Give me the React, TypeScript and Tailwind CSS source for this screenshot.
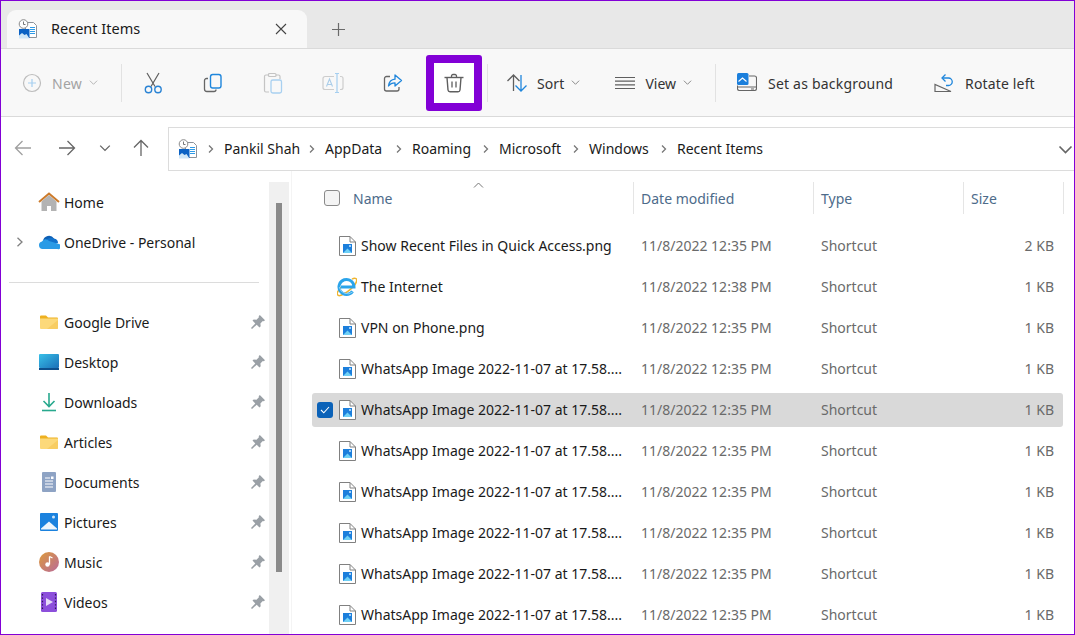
import React from "react";

const RecentIcon = () => (
  <svg width="20" height="20" viewBox="0 0 20 20" className="shrink-0">
    <path d="M7.500 3.500h8l3 3v12h-11z" fill="#fff" stroke="#8d9299" />
    <path d="M12 8.500h5M12 10.500h5M12 12.500h5M12 14.500h5" stroke="#2f9be8" />
    <circle cx="5.500" cy="5" r="4.300" fill="#fff" stroke="#8b8b8b" />
    <path d="M5.500 2.500v3h2" fill="none" stroke="#777" />
    <path d="M1 10h10.500v9H1z" fill="#0c62c4" />
    <path d="M1 19.500v-3l3-2.500 2.500 2 2-1 3 4.500z" fill="#cfe6f7" />
  </svg>
);

const Chev = ({ className = "", color = "#8a8a8a", w = 9 }: { className?: string; color?: string; w?: number }) => (
  <svg width={w} height={w} viewBox="0 0 10 10" className={"shrink-0 " + className}>
    <path d="M1 3l4 4 4-4" fill="none" stroke={color} strokeWidth="1.100" />
  </svg>
);

const Crumb = () => (
  <svg width="8" height="10" viewBox="0 0 8 10" className="shrink-0 mx-[9px]">
    <path d="M2 1.500l3.500 3.500-3.500 3.500" fill="none" stroke="#777" strokeWidth="1.300" />
  </svg>
);

const New = () => (
  <svg width="20" height="20" viewBox="0 0 20 20">
    <circle cx="10" cy="10" r="8.500" fill="none" stroke="#bdbdbd" strokeWidth="1.200" />
    <path d="M10 6v8M6 10h8" stroke="#a6cff0" strokeWidth="1.200" />
  </svg>
);
const Cut = () => (
  <svg width="20" height="22" viewBox="0 0 20 22">
    <path d="M4 1l8 13.500M16 1L8 14.500" fill="none" stroke="#5f5f5f" strokeWidth="1.200" />
    <circle cx="5.500" cy="17.500" r="3.200" fill="none" stroke="#2a83d4" strokeWidth="1.400" />
    <circle cx="15" cy="17.500" r="3.200" fill="none" stroke="#2a83d4" strokeWidth="1.400" />
  </svg>
);
const Copy = () => (
  <svg width="20" height="20" viewBox="0 0 20 20">
    <path d="M5 5.500H3.500a2 2 0 0 0-2 2v8.500a2.500 2.500 0 0 0 2.500 2.500h7a2 2 0 0 0 2-2" fill="none" stroke="#666" strokeWidth="1.300" />
    <rect x="7.500" y="1.500" width="10.500" height="13.500" rx="2.200" fill="none" stroke="#1f86dc" strokeWidth="1.400" />
  </svg>
);
const Paste = () => (
  <svg width="20" height="22" viewBox="0 0 20 22">
    <path d="M5.500 3H3a1.500 1.500 0 0 0-1.500 1.500v14A1.500 1.500 0 0 0 3 20h3M13 3h2.500A1.500 1.500 0 0 1 17 4.500V7" fill="none" stroke="#c4c4c4" strokeWidth="1.200" />
    <rect x="5.500" y="1.500" width="7.500" height="3" rx="1" fill="none" stroke="#c4c4c4" strokeWidth="1.200" />
    <rect x="8" y="8" width="10.500" height="13" rx="1.800" fill="none" stroke="#a8d0f0" strokeWidth="1.300" />
  </svg>
);
const Rename = () => (
  <svg width="22" height="22" viewBox="0 0 22 22">
    <path d="M12 4.500H3a2 2 0 0 0-2 2v9a2 2 0 0 0 2 2h9M18 4.500h1a2 2 0 0 1 2 2v9a2 2 0 0 1-2 2h-1" fill="none" stroke="#cdcdcd" strokeWidth="1.200" />
    <path d="M4.500 14.500L7.500 7l3 7.500M5.500 12.500h4" fill="none" stroke="#aacde9" strokeWidth="1.100" />
    <path d="M13 1.500h4M13 20.500h4M15 1.500v19" fill="none" stroke="#a6cff0" strokeWidth="1.200" />
  </svg>
);
const Share = () => (
  <svg width="20" height="20" viewBox="0 0 20 20">
    <path d="M7 3.500H3.500a2 2 0 0 0-2 2v10.500a2 2 0 0 0 2 2H14a2 2 0 0 0 2-2v-2" fill="none" stroke="#666" strokeWidth="1.300" />
    <path d="M12 2l6.500 5.500L12 13v-3.200c-3 0-5 1-6.500 3.200.5-4 2.800-6.500 6.500-6.800z" fill="none" stroke="#1f86dc" strokeWidth="1.300" strokeLinejoin="round" />
  </svg>
);
const Trash = () => (
  <svg width="20" height="20" viewBox="0 0 20 20">
    <path d="M.5 4.500h19" stroke="#5f5f5f" strokeWidth="1.400" />
    <path d="M7.500 4.500V3a1.500 1.500 0 0 1 1.500-1.500h2A1.500 1.500 0 0 1 12.500 3v1.500" fill="none" stroke="#5f5f5f" strokeWidth="1.300" />
    <path d="M3 4.500l1 12.500a2 2 0 0 0 2 1.800h8a2 2 0 0 0 2-1.800l1-12.500" fill="none" stroke="#5f5f5f" strokeWidth="1.400" />
    <path d="M8 8.500v6M12 8.500v6" stroke="#5f5f5f" strokeWidth="1.300" />
  </svg>
);
const Sort = () => (
  <svg width="22" height="20" viewBox="0 0 22 20">
    <path d="M7.500 18V2M1.500 8l6-6 6 6" fill="none" stroke="#5f5f5f" strokeWidth="1.300" />
    <path d="M15 2v16M9.500 12.500l5.500 5.500 5.500-5.500" fill="none" stroke="#1f86dc" strokeWidth="1.300" />
  </svg>
);
const ViewIcon = () => (
  <svg width="20" height="14" viewBox="0 0 20 14">
    <path d="M0 1.500h20M0 5.200h20M0 8.900h20M0 12.500h20" stroke="#5f5f5f" strokeWidth="1.200" />
  </svg>
);
const SetBg = () => (
  <svg width="20" height="19" viewBox="0 0 20 19">
    <path d="M12 3h5.500a2 2 0 0 1 2 2v10.500a2 2 0 0 1-2 2H2.500a2 2 0 0 1-2-2v-3" fill="none" stroke="#666" strokeWidth="1.100" />
    <path d="M.5 14h19" stroke="#666" strokeWidth="1" />
    <path d="M14 16h3" stroke="#666" strokeWidth="1" />
    <rect x="0" y="0" width="11.500" height="12" rx="1.500" fill="#1b7fdc" />
    <path d="M1.500 8.500l4-3.500 4 3.500" fill="none" stroke="#fff" strokeWidth="1.100" />
  </svg>
);
const Rotate = () => (
  <svg width="19" height="20" viewBox="0 0 19 20">
    <path d="M1 18.500V11.500L17 18.500z" fill="none" stroke="#666" strokeWidth="1.200" />
    <path d="M9 5h5.500a3 3 0 0 1 0 7.500H12" fill="none" stroke="#1f86dc" strokeWidth="1.300" />
    <path d="M11.500 1.500L8 5l3.500 3.500" fill="none" stroke="#1f86dc" strokeWidth="1.300" />
  </svg>
);

const Pin = () => (
  <svg width="14" height="14" viewBox="0 0 14 14" className="shrink-0">
    <path d="M8.800 0L14 5.200l-1.200 1.100-1-.2-2.400 2.400.3 2.800-1.200 1.200-2.800-2.800L1 14l-1-1 4.300-4.600-2.800-2.800 1.200-1.200 2.800.3L7.900 2.300l-.2-1z" fill="#9aa0a6" />
  </svg>
);

const Folder = () => (
  <svg width="20" height="20" viewBox="0 0 20 20">
    <path d="M1 4.500A1 1 0 0 1 2 3.500h5l2 2h9a1 1 0 0 1 1 1V7H1z" fill="#eeb01f" />
    <path d="M1 6.500h18v9.500a1 1 0 0 1-1 1H2a1 1 0 0 1-1-1z" fill="#fcd97a" />
    <path d="M8 17l11-9v8a1 1 0 0 1-1 1z" fill="#f8cd62" />
  </svg>
);
const HomeIcon = () => (
  <svg width="22" height="20" viewBox="0 0 22 20">
    <path d="M3.500 9.500L11 3l7.500 6.500V19H13v-5H9v5H3.500z" fill="#b3b3b3" />
    <path d="M1 10L11 1.500 21 10" fill="none" stroke="#cc7a2a" strokeWidth="2" />
  </svg>
);
const Cloud = () => (
  <svg width="22" height="16" viewBox="0 0 22 16">
    <path d="M5 7a6 6 0 0 1 11-2.500A4 4 0 0 1 19 9H5z" fill="#0d5fb5" />
    <path d="M8 7a5 5 0 0 1 8-2 4 4 0 0 1 4 4l-7 2z" fill="#1272cc" />
    <path d="M4.500 15A3.800 3.800 0 0 1 4 7.500 4 4 0 0 1 11 7l10 3a2.500 2.500 0 0 1-1.500 5z" fill="#2a9be6" />
  </svg>
);
const DesktopIcon = () => (
  <svg width="20" height="16" viewBox="0 0 20 16">
    <defs>
      <linearGradient id="dg" x1="0" y1="0" x2="1" y2="1">
        <stop offset="0" stopColor="#38c0e8" />
        <stop offset="1" stopColor="#1b6fb8" />
      </linearGradient>
    </defs>
    <rect x="0" y="0" width="20" height="14" rx="1" fill="url(#dg)" />
    <rect x="0" y="14" width="20" height="2" fill="#0e4f8c" />
  </svg>
);
const Download = () => (
  <svg width="16" height="20" viewBox="0 0 16 20">
    <path d="M8 1v13M2.500 9l5.500 5.500L13.500 9" fill="none" stroke="#28a98e" strokeWidth="1.600" />
    <path d="M1 18.500h14" stroke="#28a98e" strokeWidth="1.600" />
  </svg>
);
const Docs = () => (
  <svg width="14" height="20" viewBox="0 0 14 20">
    <rect width="14" height="20" rx="1" fill="#8ea3c4" />
    <path d="M3 6h5M3 9h8M3 12h8M3 15h8" stroke="#fff" strokeWidth="1.100" />
    <rect x="9" y="4.500" width="2.500" height="2.500" fill="#fff" />
  </svg>
);
const Pictures = () => (
  <svg width="18" height="18" viewBox="0 0 18 18">
    <rect width="18" height="18" rx="1" fill="#1b82de" />
    <path d="M1 16.500v-1l8-7 8 7v1z" fill="#eef6fc" />
    <circle cx="13.500" cy="4" r="1.500" fill="#cfe6f9" />
  </svg>
);
const Music = () => (
  <svg width="20" height="20" viewBox="0 0 20 20">
    <defs>
      <linearGradient id="mg" x1="0" y1="0" x2="1" y2="1">
        <stop offset="0" stopColor="#dc9a3a" />
        <stop offset="1" stopColor="#b96a9a" />
      </linearGradient>
    </defs>
    <circle cx="10" cy="10" r="10" fill="url(#mg)" />
    <path d="M10.500 4.500v8" stroke="#fff" strokeWidth="1.300" />
    <path d="M10.500 4.500l3 1.500" stroke="#fff" strokeWidth="1.300" />
    <circle cx="8.500" cy="12.500" r="2.200" fill="#fff" />
  </svg>
);
const Videos = () => (
  <svg width="16" height="20" viewBox="0 0 16 20">
    <rect width="16" height="20" rx="1.500" fill="#8c4fdb" />
    <path d="M5 6l7 4-7 4z" fill="#e6dcf7" />
    <path d="M1.500 2v16M14.500 2v16" stroke="#2e1a57" strokeWidth="1.200" strokeDasharray="1.400 2" />
  </svg>
);

const FileIcon = () => (
  <svg width="17" height="20" viewBox="0 0 17 20" className="shrink-0">
    <path d="M.5.500h10.500l5.500 5.500v13.500H.500z" fill="#fff" stroke="#808080" />
    <path d="M11 .5v5.500h5.500" fill="none" stroke="#808080" />
    <rect x="4" y="8" width="9" height="9" fill="#1c7fdc" />
    <path d="M4 17l4.500-4.500L13 17z" fill="#6fd0f5" />
    <circle cx="11" cy="10" r="1" fill="#cfeaff" />
  </svg>
);
const IE = () => (
  <svg width="20" height="20" viewBox="0 0 20 20" className="shrink-0">
    <path d="M15 2.200c2.500-1.500 4.700-1 4.700 1 0 3-4.700 8-9.200 11.500-5 3.700-9 5-10 3-.7-1.300.8-4.500 3.500-7.500" fill="none" stroke="#efb530" strokeWidth="1.500" />
    <path d="M15.600 14.300A7.500 7.500 0 1 1 17 10H4" fill="none" stroke="#2ba4ea" strokeWidth="3" />
    <path d="M15.800 14.800A8.300 8.300 0 0 1 2.200 10" fill="none" stroke="#8dd2f5" strokeWidth="1" />
  </svg>
);

const tools: React.ReactNode[] = [<Cut />, <Copy />, <Paste />, <Rename />, <Share />];

const nav: [string, React.ReactNode][] = [
  ["Google Drive", <Folder />],
  ["Desktop", <DesktopIcon />],
  ["Downloads", <Download />],
  ["Articles", <Folder />],
  ["Documents", <Docs />],
  ["Pictures", <Pictures />],
  ["Music", <Music />],
  ["Videos", <Videos />],
];

const crumbs: [string, string][] = [
  ["Pankil Shah", "w-[75px]"],
  ["AppData", "w-[61px]"],
  ["Roaming", "w-[61px]"],
  ["Microsoft", "w-[64px]"],
  ["Windows", "w-[62px]"],
  ["Recent Items", "w-[86px]"],
];

const WA = "WhatsApp Image 2022-11-07 at 17.58....";
const files = [
  { n: "Show Recent Files in Quick Access.png", d: "11/8/2022 12:35 PM", s: "2 KB" },
  { n: "The Internet", d: "11/8/2022 12:38 PM", s: "1 KB", ie: true },
  { n: "VPN on Phone.png", d: "11/8/2022 12:35 PM", s: "1 KB" },
  { n: WA, d: "11/8/2022 12:35 PM", s: "1 KB" },
  { n: WA, d: "11/8/2022 12:35 PM", s: "1 KB", sel: true },
  { n: WA, d: "11/8/2022 12:35 PM", s: "1 KB" },
  { n: WA, d: "11/8/2022 12:35 PM", s: "1 KB" },
  { n: WA, d: "11/8/2022 12:35 PM", s: "1 KB" },
  { n: WA, d: "11/8/2022 12:35 PM", s: "1 KB" },
  { n: WA, d: "11/8/2022 12:35 PM", s: "1 KB" },
];

const NavRow = ({ icon, label, pin, chevron }: { icon: React.ReactNode; label: string; pin?: boolean; chevron?: boolean }) => (
  <div className="flex h-10 items-center text-[#1a1a1a]">
    <div className="ml-[12px] flex w-[13px] justify-center">
      {chevron && (
        <svg width="8" height="10" viewBox="0 0 8 10">
          <path d="M1.500 .8l4.500 4.200-4.500 4.200" fill="none" stroke="#808080" strokeWidth="1.300" />
        </svg>
      )}
    </div>
    <div className="ml-[12px] flex w-[22px] justify-center">{icon}</div>
    <span className="ml-[4px] flex-1">{label}</span>
    {pin && (
      <div className="mr-[4px]">
        <Pin />
      </div>
    )}
  </div>
);

export default function App() {
  return (
    <div
      className="flex h-[635px] w-[1075px] flex-col overflow-hidden border border-[#8200d6] bg-white text-[14px]"
      style={{ fontFamily: '"Noto Sans", sans-serif' }}
    >
      {/* tabs */}
      <div className="flex h-[48px] shrink-0 items-end border-b border-[#dadada] bg-[#e8e8e8]">
        <div className="ml-[6px] flex h-[38px] w-[300px] items-center rounded-t-[9px] bg-[#f8f8f8] pb-[1px] pl-[11px] pr-[20px]">
          <RecentIcon />
          <span className="ml-[13px] flex-1 text-[14.5px] text-[#1a1a1a]">Recent Items</span>
          <svg width="12" height="12" viewBox="0 0 12 12">
            <path d="M1 1l10 10M11 1L1 11" stroke="#444" strokeWidth="1.100" />
          </svg>
        </div>
        <div className="ml-[25px] flex h-[38px] items-center">
          <svg width="13" height="13" viewBox="0 0 13 13">
            <path d="M6.500 0v13M0 6.500h13" stroke="#6a6a6a" strokeWidth="1.200" />
          </svg>
        </div>
      </div>

      {/* toolbar */}
      <div className="flex h-[68px] shrink-0 items-center border-b border-[#dadada] bg-[#f8f8f8] text-[#333]">
        <div className="flex w-[120px] items-center pl-[21px] text-[#a3a3a3]">
          <New />
          <span className="ml-[10px] pt-[2px] tracking-[0.3px]">New</span>
          <Chev className="ml-[7px]" color="#b5b5b5" />
        </div>
        <div className="h-[38px] w-px bg-[#e2e2e2]" />
        {tools.map((icon, i) => (
          <div key={i} className={"flex h-[38px] items-center justify-center " + (i === 0 ? "w-[61px] pl-px" : "w-[60px]")}>
            {icon}
          </div>
        ))}
        <div className="ml-[3px] flex h-[56px] w-[56px] items-center justify-center rounded-[3px] border-[8px] border-[#8200d6] bg-white pr-[1px]">
          <Trash />
        </div>
        <div className="ml-[5px] h-[38px] w-px bg-[#e2e2e2]" />
        <div className="ml-[18px] flex items-center">
          <Sort />
          <span className="ml-[9px] pt-[2px] tracking-[0.1px]">Sort</span>
          <Chev className="ml-[7px]" />
        </div>
        <div className="ml-[35px] flex items-center">
          <ViewIcon />
          <span className="ml-[10px] pt-[2px]">View</span>
          <Chev className="ml-[7px]" />
        </div>
        <div className="ml-[23px] h-[38px] w-px bg-[#e2e2e2]" />
        <div className="ml-[21px] flex items-center">
          <SetBg />
          <span className="ml-[11px] pt-[2px] tracking-[0.2px]">Set as background</span>
        </div>
        <div className="ml-[41px] flex items-center">
          <Rotate />
          <span className="ml-[12px] pt-[2px] tracking-[0.15px]">Rotate left</span>
        </div>
      </div>

      {/* address */}
      <div className="flex h-[54px] shrink-0 items-start">
        <div className="flex h-full w-[167px] shrink-0 items-center pt-[8px]">
          <div className="flex w-[44px] justify-center">
            <svg width="18" height="16" viewBox="0 0 18 16"><path d="M17 8H1.500M8.500 1L1.500 8l7 7" fill="none" stroke="#a0a0a0" strokeWidth="1.300" /></svg>
          </div>
          <div className="flex w-[44px] justify-center">
            <svg width="18" height="16" viewBox="0 0 18 16"><path d="M1 8h15.500M9.500 1l7 7-7 7" fill="none" stroke="#666" strokeWidth="1.300" /></svg>
          </div>
          <div className="flex w-[32px] justify-center">
            <Chev w={12} color="#666" />
          </div>
          <div className="flex w-[40px] justify-center">
            <svg width="16" height="18" viewBox="0 0 16 18"><path d="M8 17V1.500M1 8.500l7-7 7 7" fill="none" stroke="#666" strokeWidth="1.300" /></svg>
          </div>
        </div>
        <div className="mt-[10px] flex h-[44px] flex-1 items-center border border-r-0 border-[#dcdcdc] pl-[9px] text-[#1a1a1a]">
          <RecentIcon />
          {crumbs.map(([t, w]) => (
            <React.Fragment key={t}>
              <Crumb />
              <span className={"whitespace-nowrap pb-[2px] " + w}>{t}</span>
            </React.Fragment>
          ))}
          <Chev w={15} className="ml-auto mr-[1px]" color="#666" />
        </div>
      </div>

      {/* main */}
      <div className="flex min-h-0 flex-1">
        <div className="w-[268px] shrink-0 pt-[11px]">
          <NavRow icon={<HomeIcon />} label="Home" />
          <NavRow icon={<Cloud />} label="OneDrive - Personal" chevron />
          <div className="flex h-10 items-center pl-[8px] pr-[10px]">
            <div className="h-px w-full bg-[#dcdcdc]" />
          </div>
          {nav.map(([label, icon]) => (
            <NavRow key={label} icon={icon} label={label} pin />
          ))}
        </div>
        <div className="mt-[11px] w-[20px] shrink-0 bg-[#f0f0f0] pl-[7px] pr-[7px] pt-[21px]">
          <div className="h-[369px] w-[6px] bg-[#8a8a8a]" />
        </div>
        <div className="ml-[2px] min-w-0 flex-1 border-l border-[#f4f4f4] pl-[20px]">
          <div className="relative mt-[11px] flex h-[32px] items-center text-[#4d6b8a]">
            <div className="flex w-[321px] items-center">
              <div className="ml-[12px] h-[16px] w-[16px] rounded-[3px] border border-[#8a8a8a] bg-[#f4f4f4]" />
              <span className="ml-[13px]">Name</span>
            </div>
            <svg width="11" height="6" viewBox="0 0 11 6" className="absolute left-[161px] top-0">
              <path d="M1 5.500L5.500 1 10 5.500" fill="none" stroke="#777" strokeWidth="1" />
            </svg>
            <div className="flex h-full w-[180px] items-center border-l border-[#e5e5e5] pl-[7px]">Date modified</div>
            <div className="flex h-full w-[150px] items-center border-l border-[#e5e5e5] pl-[7px]">Type</div>
            <div className="flex h-full w-[101px] items-center border-x border-[#e5e5e5] pl-[7px]">Size</div>
          </div>
          <div className="mt-[15px] flex flex-col gap-[7px]">
            {files.map((f, i) => (
              <div key={i} className={"flex h-[34px] w-[751px] shrink-0 items-center rounded-[3px] text-[#6a6a6a] " + (f.sel ? "bg-[#d9d9d9]" : "")}>
                <div className="flex w-[321px] items-center">
                  <div className="flex w-[26px] justify-end pr-[5px]">
                    {f.sel && (
                      <div className="flex h-[16px] w-[16px] items-center justify-center rounded-[3px] bg-[#0b62b8]">
                        <svg width="10" height="8" viewBox="0 0 10 8"><path d="M1 4l2.800 2.800L9 1" fill="none" stroke="#fff" strokeWidth="1.100" /></svg>
                      </div>
                    )}
                  </div>
                  <div className="flex w-[18px] justify-center">{f.ie ? <IE /> : <FileIcon />}</div>
                  <span className="ml-[5px] whitespace-nowrap pb-[1px] text-[#1a1a1a]">{f.n}</span>
                </div>
                <div className="w-[180px] pb-[1px] pl-[8px]">{f.d}</div>
                <div className="w-[150px] pb-[1px] pl-[8px]">Shortcut</div>
                <div className="w-[91px] pb-[1px] text-right">{f.s}</div>
              </div>
            ))}
          </div>
        </div>
      </div>
    </div>
  );
}
